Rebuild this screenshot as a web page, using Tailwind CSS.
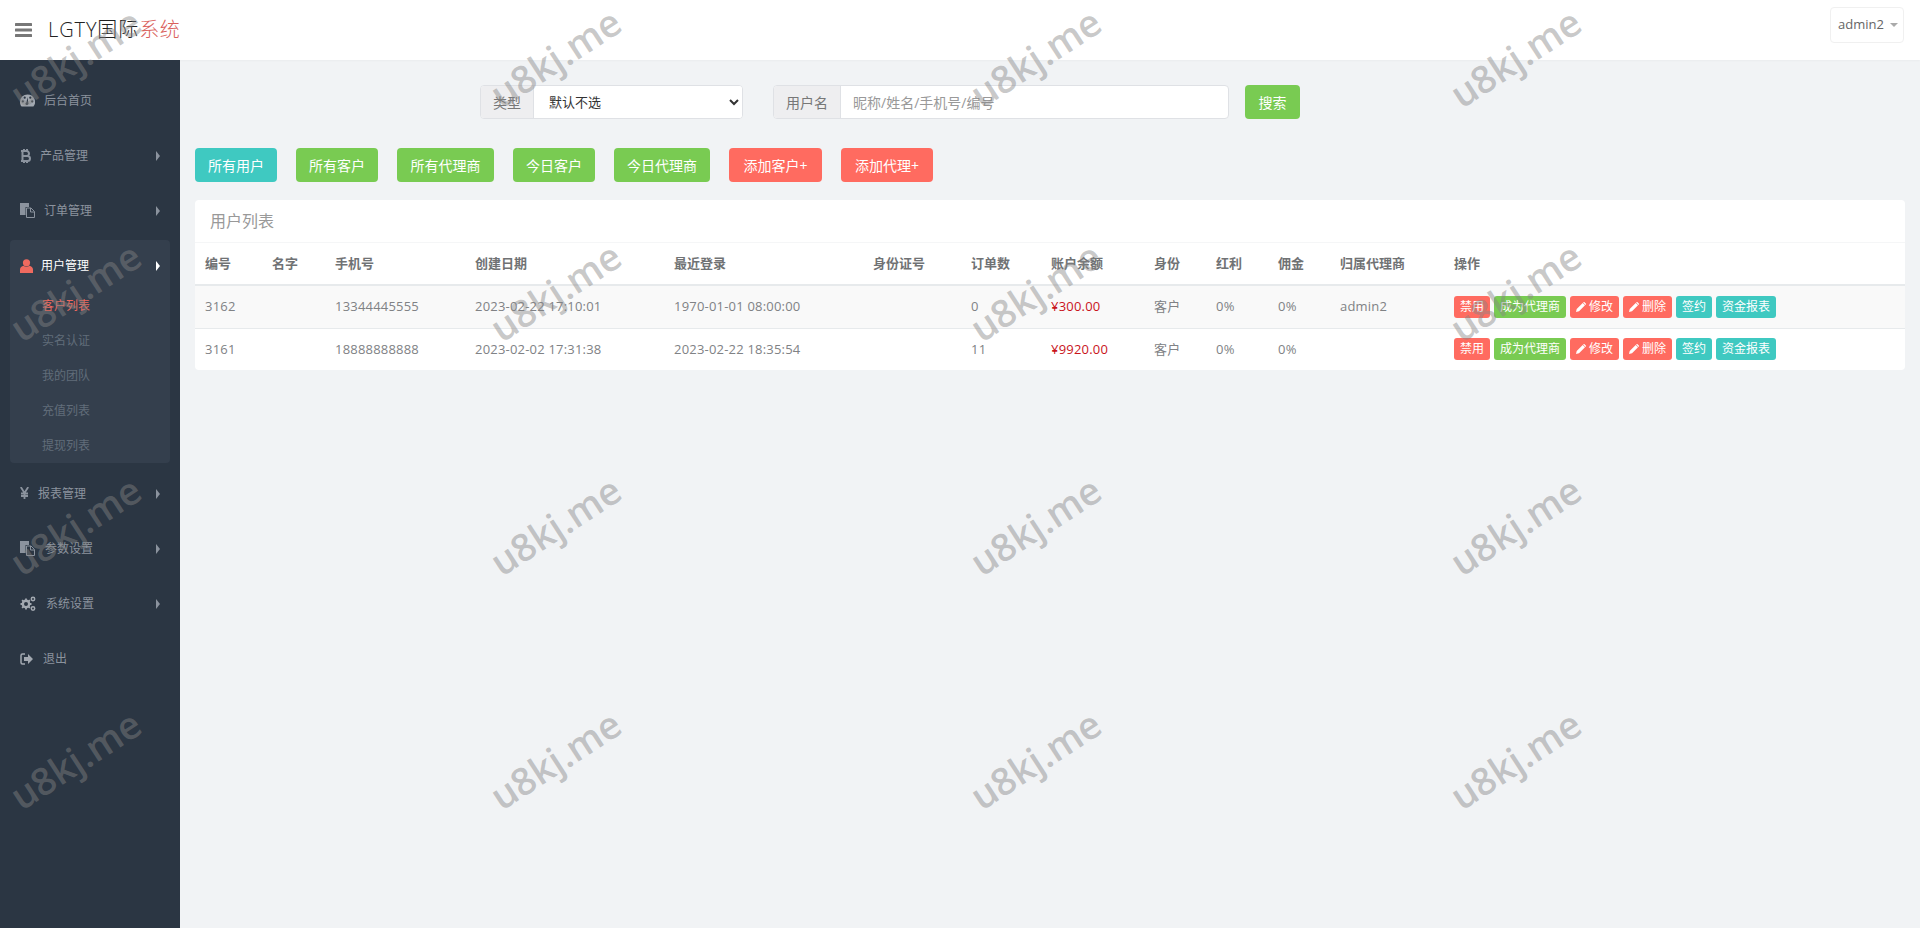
<!DOCTYPE html>
<html lang="zh">
<head>
<meta charset="utf-8">
<script src="https://cdn.jsdelivr.net/npm/@tailwindcss/browser@4"></script>
<title>LGTY</title>
</head>
<body class="relative w-[1920px] h-[928px] overflow-hidden bg-[#f1f3f5] font-['Open_Sans','Noto_Sans_CJK_SC',sans-serif] text-[13px] text-[#676a6c]">
<header class="h-[60px] bg-white flex items-center justify-between shadow-[0_1px_2px_rgba(0,0,0,0.03)]">
  <div class="flex items-center">
    <svg class="ml-[15px] w-[17px] h-[14px] text-[#777]" viewBox="0 0 17 14" fill="currentColor"><rect width="17" height="3" rx="0.6"/><rect y="5.500" width="17" height="3" rx="0.6"/><rect y="11" width="17" height="3" rx="0.6"/></svg>
    <div class="ml-[16px] text-[20px] leading-[28px] font-light text-[#222] tracking-[0.9px]">LGTY国际<span class="text-[#d9605a] tracking-[0.5px]">系统</span></div>
  </div>
  <div class="self-start mt-[7px] mr-[16px] w-[74px] h-[36px] border border-[#f0f0f0] rounded-[4px] flex items-center pl-[7px] gap-[6px] text-[13px] text-[#666]">admin2<span class="w-0 h-0 border-x-[4px] border-x-transparent border-t-[4px] border-t-[#aaa]"></span></div>
</header>
<div class="flex h-[868px]">
  <aside class="w-[180px] shrink-0 bg-[#2b3643] pt-[13px] text-[12px] text-[#8b939e]">
    <a class="h-[55px] flex items-center pl-[20px]">
      <svg class="w-[15px] h-[13px]" viewBox="0 0 16 13" fill="#a3a9b1"><path d="M8 0a8 8 0 0 0-8 8c0 1.900.6 3.600 1.700 5h12.600A8 8 0 0 0 8 0Zm-5 8.700a1.200 1.200 0 1 1 0-2.400 1.200 1.200 0 0 1 0 2.400Zm2-4a1.200 1.200 0 1 1 0-2.400 1.200 1.200 0 0 1 0 2.400Zm3.800 5.500a1.500 1.500 0 1 1-1.900-1.800L8 3l.8 5.500a1.500 1.500 0 0 1 0 1.700ZM11 4.700a1.200 1.200 0 1 1 0-2.400 1.200 1.200 0 0 1 0 2.400Zm2 4a1.200 1.200 0 1 1 0-2.400 1.200 1.200 0 0 1 0 2.400Z"/></svg>
      <span class="ml-[9px]">后台首页</span>
    </a>
    <a class="h-[55px] flex items-center pl-[20px]">
      <svg class="w-[11px] h-[14px]" viewBox="0 0 11 14" fill="none" stroke="#8b939e" stroke-width="2"><path d="M1 2h5.500a2.400 2.400 0 0 1 0 5H2h5.500a2.500 2.500 0 0 1 0 5H1M2.500 2v10M4 0v2M7 0v2M4 12v2M7 12v2"/></svg>
      <span class="ml-[9px]">产品管理</span>
      <span class="ml-auto mr-[20px] w-0 h-0 border-y-[5px] border-y-transparent border-l-[4px] border-l-[#8b939e]"></span>
    </a>
    <a class="h-[55px] flex items-center pl-[20px]">
      <svg class="w-[15px] h-[15px]" viewBox="0 0 15 15"><path d="M0 0h9v4H5.500v8H0Z" fill="#8b939e"/><path d="M6.500 5h4.500l3.500 3.500V14.500h-8Z" fill="none" stroke="#8b939e"/><path d="M10.500 5v4h4" fill="none" stroke="#8b939e"/></svg>
      <span class="ml-[9px]">订单管理</span>
      <span class="ml-auto mr-[20px] w-0 h-0 border-y-[5px] border-y-transparent border-l-[4px] border-l-[#8b939e]"></span>
    </a>
    <div class="mt-[2px] mx-[10px] rounded-[4px] bg-[#343f4d]">
      <a class="h-[48px] pt-[3px] flex items-center pl-[10px] text-white">
        <svg class="w-[13px] h-[14px]" viewBox="0 0 13 14" fill="#ef6a5f"><circle cx="6.500" cy="3.800" r="3.600"/><path d="M0 14v-3.400C0 8.500 1.800 7 3.500 6.800c.8.700 1.900 1.100 3 1.100s2.200-.4 3-1.100C11.200 7 13 8.500 13 10.600V14Z"/></svg>
        <span class="ml-[8px]">用户管理</span>
        <span class="ml-auto mr-[10px] w-0 h-0 border-y-[5px] border-y-transparent border-l-[4px] border-l-white"></span>
      </a>
      <a class="h-[35px] flex items-center pl-[32px] text-[#ef6a5f]">客户列表</a>
      <a class="h-[35px] flex items-center pl-[32px] text-[#616d7a]">实名认证</a>
      <a class="h-[35px] flex items-center pl-[32px] text-[#616d7a]">我的团队</a>
      <a class="h-[35px] flex items-center pl-[32px] text-[#616d7a]">充值列表</a>
      <a class="h-[35px] flex items-center pl-[32px] text-[#616d7a]">提现列表</a>
    </div>
    <a class="mt-[3px] h-[55px] flex items-center pl-[20px]">
      <svg class="w-[9px] h-[12px] -mt-[2px]" viewBox="0 0 9 12" fill="none" stroke="#8b939e" stroke-width="1.800"><path d="M.8 0l3.700 6 3.700-6M4.500 6v6M1 6.500h7M1 9h7"/></svg>
      <span class="ml-[9px]">报表管理</span>
      <span class="ml-auto mr-[20px] w-0 h-0 border-y-[5px] border-y-transparent border-l-[4px] border-l-[#8b939e]"></span>
    </a>
    <a class="h-[55px] flex items-center pl-[20px]">
      <svg class="w-[15px] h-[15px]" viewBox="0 0 15 15"><path d="M0 0h9v4H5.500v8H0Z" fill="#8b939e"/><path d="M6.500 5h4.500l3.500 3.500V14.500h-8Z" fill="none" stroke="#8b939e"/><path d="M10.500 5v4h4" fill="none" stroke="#8b939e"/></svg>
      <span class="ml-[10px]">参数设置</span>
      <span class="ml-auto mr-[20px] w-0 h-0 border-y-[5px] border-y-transparent border-l-[4px] border-l-[#8b939e]"></span>
    </a>
    <a class="h-[55px] flex items-center pl-[20px]">
      <svg class="w-[16px] h-[15px]" viewBox="0 0 16 15" fill="none" stroke="#a3a9b1"><circle cx="6" cy="8" r="3.200" stroke-width="2.400"/><path d="M6 2.500v2M6 11.500v2M.5 8h2M9.500 8h2M2.100 4.100l1.400 1.400M8.500 10.500l1.400 1.400M2.100 11.900l1.400-1.400M8.500 5.500l1.400-1.400" stroke-width="1.800"/><circle cx="13" cy="3" r="1.700" stroke-width="1.500"/><circle cx="13" cy="12.500" r="1.700" stroke-width="1.500"/></svg>
      <span class="ml-[10px]">系统设置</span>
      <span class="ml-auto mr-[20px] w-0 h-0 border-y-[5px] border-y-transparent border-l-[4px] border-l-[#8b939e]"></span>
    </a>
    <a class="h-[55px] flex items-center pl-[20px]">
      <svg class="w-[13px] h-[12px]" viewBox="0 0 13 12"><path d="M5 1H2.500A1.500 1.500 0 0 0 1 2.500v7A1.500 1.500 0 0 0 2.500 11H5" fill="none" stroke="#a3a9b1" stroke-width="1.500"/><path d="M4 4h4V1l5 5-5 5V8H4Z" fill="#a3a9b1"/></svg>
      <span class="ml-[10px]">退出</span>
    </a>
  </aside>
  <main class="flex-1 px-[15px] pt-[25px]">
    <form class="flex pl-[285px]">
      <div class="flex w-[263px] h-[34px] border border-[#dfe1e5] rounded-[4px] bg-white overflow-hidden">
        <span class="w-[53px] shrink-0 flex items-center justify-center bg-[#eeeef0] border-r border-[#dfe1e5] text-[14px] text-[#777]">类型</span>
        <select class="flex-1 h-full pl-[11px] bg-white text-[13px] text-[#333] outline-none"><option>默认不选</option></select>
      </div>
      <div class="ml-[30px] flex w-[456px] h-[34px] border border-[#dfe1e5] rounded-[4px] bg-white overflow-hidden">
        <span class="w-[67px] shrink-0 flex items-center justify-center bg-[#eeeef0] border-r border-[#dfe1e5] text-[14px] text-[#777]">用户名</span>
        <input class="flex-1 px-[12px] text-[14px] outline-none placeholder:text-[#999]" placeholder="昵称/姓名/手机号/编号">
      </div>
      <button type="button" class="ml-[16px] w-[55px] h-[34px] rounded-[4px] bg-[#79cb52] text-white text-[14px]">搜索</button>
    </form>
    <div class="mt-[29px] flex gap-[19px] text-[14px] text-white">
      <button class="h-[34px] w-[82px] rounded-[4px] bg-[#3fc9c1]">所有用户</button>
      <button class="h-[34px] w-[82px] rounded-[4px] bg-[#79cb52]">所有客户</button>
      <button class="h-[34px] w-[97px] rounded-[4px] bg-[#79cb52]">所有代理商</button>
      <button class="h-[34px] w-[82px] rounded-[4px] bg-[#79cb52]">今日客户</button>
      <button class="h-[34px] w-[96px] rounded-[4px] bg-[#79cb52]">今日代理商</button>
      <button class="h-[34px] w-[93px] rounded-[4px] bg-[#ff6b60]">添加客户+</button>
      <button class="h-[34px] w-[92px] rounded-[4px] bg-[#ff6b60]">添加代理+</button>
    </div>
    <section class="mt-[18px] w-[1710px] bg-white rounded-[4px] overflow-hidden">
      <h2 class="h-[43px] pl-[15px] flex items-center border-b border-[#f5f6f7] text-[16px] font-normal text-[#999]">用户列表</h2>
      <table class="w-full table-fixed border-collapse text-left">
        <colgroup><col class="w-[67px]"><col class="w-[63px]"><col class="w-[140px]"><col class="w-[199px]"><col class="w-[199px]"><col class="w-[98px]"><col class="w-[80px]"><col class="w-[103px]"><col class="w-[62px]"><col class="w-[62px]"><col class="w-[62px]"><col class="w-[114px]"><col></colgroup>
        <thead class="text-[#707274]">
          <tr class="h-[42px] border-b-2 border-[#e7eaec]">
            <th class="pl-[10px] font-semibold">编号</th><th class="pl-[10px] font-semibold">名字</th><th class="pl-[10px] font-semibold">手机号</th><th class="pl-[10px] font-semibold">创建日期</th><th class="pl-[10px] font-semibold">最近登录</th><th class="pl-[10px] font-semibold">身份证号</th><th class="pl-[10px] font-semibold">订单数</th><th class="pl-[10px] font-semibold">账户余额</th><th class="pl-[10px] font-semibold">身份</th><th class="pl-[10px] font-semibold">红利</th><th class="pl-[10px] font-semibold">佣金</th><th class="pl-[10px] font-semibold">归属代理商</th><th class="pl-[10px] font-semibold">操作</th>
          </tr>
        </thead>
        <tbody class="text-[#808285] tracking-[0.2px]">
          <tr class="h-[43px] bg-[#f9f9f9] border-b border-[#e7eaec]">
            <td class="pl-[10px]">3162</td><td class="pl-[10px]"></td><td class="pl-[10px]">13344445555</td><td class="pl-[10px]">2023-02-22 17:10:01</td><td class="pl-[10px]">1970-01-01 08:00:00</td><td class="pl-[10px]"></td><td class="pl-[10px]">0</td><td class="pl-[10px] text-[#c9141c]">¥300.00</td><td class="pl-[10px]">客户</td><td class="pl-[10px]">0%</td><td class="pl-[10px]">0%</td><td class="pl-[10px]">admin2</td>
            <td class="pl-[10px]">
              <div class="flex gap-[4px] text-[12px] tracking-normal text-white">
                <span class="h-[22px] w-[36px] rounded-[3px] bg-[#ff6b60] flex items-center justify-center">禁用</span>
                <span class="h-[22px] w-[72px] rounded-[3px] bg-[#79cb52] flex items-center justify-center">成为代理商</span>
                <span class="h-[22px] w-[49px] rounded-[3px] bg-[#ff6b60] flex items-center justify-center gap-[3px]"><svg class="w-[10px] h-[10px]" viewBox="0 0 10 10" fill="white"><path d="M6.700 1 9 3.300 3 9.300 0 10l.7-3ZM7.500.2c.3-.3.700-.3 1 0l1.300 1.300c.3.300.3.700 0 1l-.4.400L7.100.6Z"/></svg>修改</span>
                <span class="h-[22px] w-[49px] rounded-[3px] bg-[#ff6b60] flex items-center justify-center gap-[3px]"><svg class="w-[10px] h-[10px]" viewBox="0 0 10 10" fill="white"><path d="M6.700 1 9 3.300 3 9.300 0 10l.7-3ZM7.500.2c.3-.3.700-.3 1 0l1.300 1.300c.3.300.3.700 0 1l-.4.400L7.100.6Z"/></svg>删除</span>
                <span class="h-[22px] w-[36px] rounded-[3px] bg-[#3fc9c1] flex items-center justify-center">签约</span>
                <span class="h-[22px] w-[60px] rounded-[3px] bg-[#3fc9c1] flex items-center justify-center">资金报表</span>
              </div>
            </td>
          </tr>
          <tr class="h-[42px]">
            <td class="pl-[10px]">3161</td><td class="pl-[10px]"></td><td class="pl-[10px]">18888888888</td><td class="pl-[10px]">2023-02-02 17:31:38</td><td class="pl-[10px]">2023-02-22 18:35:54</td><td class="pl-[10px]"></td><td class="pl-[10px]">11</td><td class="pl-[10px] text-[#c9141c]">¥9920.00</td><td class="pl-[10px]">客户</td><td class="pl-[10px]">0%</td><td class="pl-[10px]">0%</td><td class="pl-[10px]"></td>
            <td class="pl-[10px]">
              <div class="flex gap-[4px] text-[12px] tracking-normal text-white">
                <span class="h-[22px] w-[36px] rounded-[3px] bg-[#ff6b60] flex items-center justify-center">禁用</span>
                <span class="h-[22px] w-[72px] rounded-[3px] bg-[#79cb52] flex items-center justify-center">成为代理商</span>
                <span class="h-[22px] w-[49px] rounded-[3px] bg-[#ff6b60] flex items-center justify-center gap-[3px]"><svg class="w-[10px] h-[10px]" viewBox="0 0 10 10" fill="white"><path d="M6.700 1 9 3.300 3 9.300 0 10l.7-3ZM7.500.2c.3-.3.700-.3 1 0l1.300 1.300c.3.300.3.700 0 1l-.4.400L7.100.6Z"/></svg>修改</span>
                <span class="h-[22px] w-[49px] rounded-[3px] bg-[#ff6b60] flex items-center justify-center gap-[3px]"><svg class="w-[10px] h-[10px]" viewBox="0 0 10 10" fill="white"><path d="M6.700 1 9 3.300 3 9.300 0 10l.7-3ZM7.500.2c.3-.3.700-.3 1 0l1.300 1.300c.3.300.3.700 0 1l-.4.400L7.100.6Z"/></svg>删除</span>
                <span class="h-[22px] w-[36px] rounded-[3px] bg-[#3fc9c1] flex items-center justify-center">签约</span>
                <span class="h-[22px] w-[60px] rounded-[3px] bg-[#3fc9c1] flex items-center justify-center">资金报表</span>
              </div>
            </td>
          </tr>
        </tbody>
      </table>
    </section>
  </main>
</div>
<!-- repeated watermark overlay -->
<div class="absolute left-[-3px] top-[-60px] h-[936px] grid grid-cols-[repeat(4,480px)] grid-rows-[repeat(4,234px)] pointer-events-none font-semibold text-[38px] leading-none text-[#858585]/45">
  <span class="w-[156px] flex items-center justify-center -rotate-[33deg]">u8kj.me</span><span class="w-[156px] flex items-center justify-center -rotate-[33deg]">u8kj.me</span><span class="w-[156px] flex items-center justify-center -rotate-[33deg]">u8kj.me</span><span class="w-[156px] flex items-center justify-center -rotate-[33deg]">u8kj.me</span>
  <span class="w-[156px] flex items-center justify-center -rotate-[33deg]">u8kj.me</span><span class="w-[156px] flex items-center justify-center -rotate-[33deg]">u8kj.me</span><span class="w-[156px] flex items-center justify-center -rotate-[33deg]">u8kj.me</span><span class="w-[156px] flex items-center justify-center -rotate-[33deg]">u8kj.me</span>
  <span class="w-[156px] flex items-center justify-center -rotate-[33deg]">u8kj.me</span><span class="w-[156px] flex items-center justify-center -rotate-[33deg]">u8kj.me</span><span class="w-[156px] flex items-center justify-center -rotate-[33deg]">u8kj.me</span><span class="w-[156px] flex items-center justify-center -rotate-[33deg]">u8kj.me</span>
  <span class="w-[156px] flex items-center justify-center -rotate-[33deg]">u8kj.me</span><span class="w-[156px] flex items-center justify-center -rotate-[33deg]">u8kj.me</span><span class="w-[156px] flex items-center justify-center -rotate-[33deg]">u8kj.me</span><span class="w-[156px] flex items-center justify-center -rotate-[33deg]">u8kj.me</span>
</div>
</body>
</html>
